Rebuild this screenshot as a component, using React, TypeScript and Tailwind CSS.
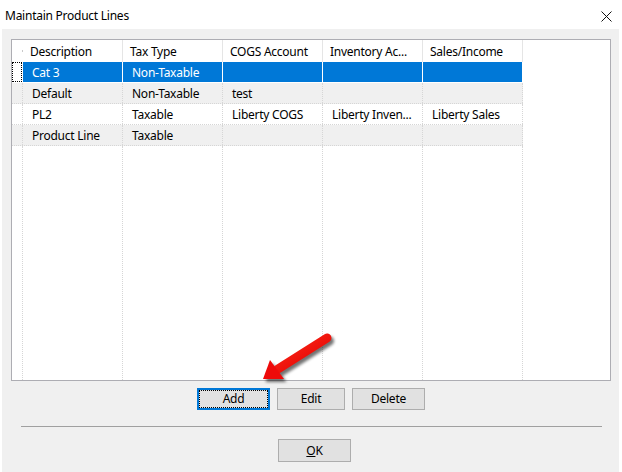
import React from "react";

interface Line {
  description: string;
  taxType: string;
  cogs: string;
  inventory: string;
  sales: string;
}

const lines: Line[] = [
  { description: "Cat 3", taxType: "Non-Taxable", cogs: "", inventory: "", sales: "" },
  { description: "Default", taxType: "Non-Taxable", cogs: "test", inventory: "", sales: "" },
  { description: "PL2", taxType: "Taxable", cogs: "Liberty COGS", inventory: "Liberty Inven...", sales: "Liberty Sales" },
  { description: "Product Line", taxType: "Taxable", cogs: "", inventory: "", sales: "" },
];

const headers = ["Description", "Tax Type", "COGS Account", "Inventory Ac...", "Sales/Income"];

const Arrow: React.FC = () => (
  <svg
    className="absolute left-[250px] top-[325px] pointer-events-none"
    width="95"
    height="70"
    viewBox="0 0 95 70"
  >
    <defs>
      <filter id="arrowShadow" x="-20%" y="-20%" width="150%" height="150%">
        <feGaussianBlur stdDeviation="1.6" />
      </filter>
      <linearGradient id="arrowRed" x1="0" y1="0" x2="1" y2="1">
        <stop offset="0" stopColor="#ff2a1a" />
        <stop offset="1" stopColor="#e00000" />
      </linearGradient>
    </defs>
    <g transform="translate(2.5 3)" fill="#000" stroke="#000" opacity="0.55" filter="url(#arrowShadow)">
      <line x1="77" y1="13" x2="28" y2="44" strokeWidth="9" strokeLinecap="round" />
      <polygon points="13,54 20,35 34,54" strokeWidth="0" />
    </g>
    <line x1="77" y1="13" x2="28" y2="44" stroke="url(#arrowRed)" strokeWidth="9" strokeLinecap="round" />
    <polygon points="13,54 20,35 34,54" fill="#ee0a0a" />
  </svg>
);

const WinButton: React.FC<{ children: React.ReactNode; width: string; focused?: boolean; height?: string }> = ({
  children,
  width,
  focused,
  height = "h-[22px]",
}) => (
  <div
    className={`${width} ${height} flex items-center justify-center bg-[#e1e1e1] ${
      focused ? "border-2 border-[#0078d7]" : "border border-[#adadad]"
    }`}
  >
    <div
      className={`w-full h-full flex items-center justify-center ${
        focused ? "border border-dotted border-black" : ""
      }`}
    >
      {children}
    </div>
  </div>
);

export default function App() {
  return (
    <div className="relative w-[622px] h-[472px] bg-white flex flex-col text-[12px] tracking-[-0.25px] text-black font-['Noto_Sans',sans-serif] overflow-hidden">
      {/* title bar */}
      <div className="h-[29px] flex items-center justify-between pl-[5px] pr-[10px]">
        <span className="leading-none mt-[3px]">Maintain Product Lines</span>
        <svg width="11" height="11" viewBox="0 0 11 11" className="mt-[3px]">
          <path d="M0.5 0.5 L10.5 10.5 M10.5 0.5 L0.5 10.5" stroke="#111" strokeWidth="1" />
        </svg>
      </div>

      {/* body */}
      <div className="flex-1 ml-[2px] mr-[3px] bg-[#f0f0f0] flex flex-col">
        {/* list */}
        <div className="ml-[9px] mt-[10px] w-[600px] h-[342px] bg-white border border-[#adadb3] flex flex-col">
          {/* header */}
          <div className="h-[22px] flex shrink-0">
            <div className="w-[11px] relative">
              <div className="absolute right-0 top-[10px] w-[1px] h-[2px] bg-[#c8c8c8]" />
            </div>
            {headers.map((h) => (
              <div
                key={h}
                className="w-[100px] border-r border-[#e5e5e5] pl-[7px] pt-[2px] flex items-center whitespace-nowrap overflow-hidden"
              >
                {h}
              </div>
            ))}
          </div>

          {/* rows */}
          {lines.map((l, i) => {
            const selected = i === 0;
            const shaded = i % 2 === 1;
            const cells = [l.description, l.taxType, l.cogs, l.inventory, l.sales];
            return (
              <div key={l.description} className="h-[21px] flex shrink-0">
                <div
                  className={`w-[511px] flex border-b ${
                    selected
                      ? "border-solid border-white"
                      : "border-dotted border-[#d6d6d6]"
                  } ${shaded ? "bg-[#f0f0f0]" : ""}`}
                >
                  <div
                    className={`w-[11px] shrink-0 border-r ${
                      selected ? "border-solid border-white" : "border-dotted border-[#d6d6d6]"
                    } flex items-stretch`}
                  >
                    {selected && (
                      <div className="w-[10px] border border-dotted border-black" />
                    )}
                  </div>
                  {cells.map((c, j) => (
                    <div
                      key={j}
                      className={`w-[100px] shrink-0 border-r pl-[9px] pt-[2px] flex items-center whitespace-nowrap overflow-hidden ${
                        selected
                          ? "bg-[#0078d7] text-white border-solid border-white"
                          : "border-dotted border-[#d6d6d6]"
                      }`}
                    >
                      {c}
                    </div>
                  ))}
                </div>
              </div>
            );
          })}

          {/* empty area with column lines */}
          <div className="flex-1 flex">
            <div className="w-[11px] border-r border-dotted border-[#d6d6d6]" />
            {headers.map((h) => (
              <div key={h} className="w-[100px] border-r border-dotted border-[#d6d6d6]" />
            ))}
          </div>
        </div>

        {/* buttons */}
        <div className="mt-[7px] ml-[195px] flex gap-[7px]">
          <WinButton width="w-[73px]" focused>
            Add
          </WinButton>
          <WinButton width="w-[68px]">Edit</WinButton>
          <WinButton width="w-[73px]">Delete</WinButton>
        </div>

        {/* separator */}
        <div className="mt-[16px] ml-[19px] w-[581px] h-[1px] bg-[#a0a0a0]" />

        {/* OK */}
        <div className="mt-[12px] ml-[276px]">
          <WinButton width="w-[73px]" height="h-[23px]">
            <span>
              <span className="underline">O</span>K
            </span>
          </WinButton>
        </div>
      </div>

      <Arrow />
    </div>
  );
}
